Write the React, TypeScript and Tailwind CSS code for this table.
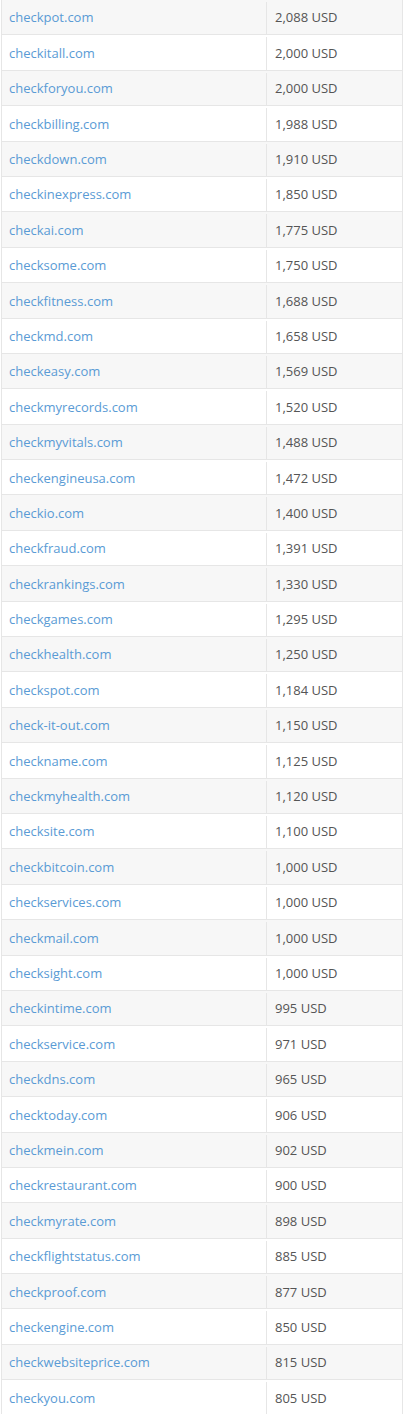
import React from 'react'

const rows: [string, string][] = [
  ['checkpot.com', '2,088 USD'],
  ['checkitall.com', '2,000 USD'],
  ['checkforyou.com', '2,000 USD'],
  ['checkbilling.com', '1,988 USD'],
  ['checkdown.com', '1,910 USD'],
  ['checkinexpress.com', '1,850 USD'],
  ['checkai.com', '1,775 USD'],
  ['checksome.com', '1,750 USD'],
  ['checkfitness.com', '1,688 USD'],
  ['checkmd.com', '1,658 USD'],
  ['checkeasy.com', '1,569 USD'],
  ['checkmyrecords.com', '1,520 USD'],
  ['checkmyvitals.com', '1,488 USD'],
  ['checkengineusa.com', '1,472 USD'],
  ['checkio.com', '1,400 USD'],
  ['checkfraud.com', '1,391 USD'],
  ['checkrankings.com', '1,330 USD'],
  ['checkgames.com', '1,295 USD'],
  ['checkhealth.com', '1,250 USD'],
  ['checkspot.com', '1,184 USD'],
  ['check-it-out.com', '1,150 USD'],
  ['checkname.com', '1,125 USD'],
  ['checkmyhealth.com', '1,120 USD'],
  ['checksite.com', '1,100 USD'],
  ['checkbitcoin.com', '1,000 USD'],
  ['checkservices.com', '1,000 USD'],
  ['checkmail.com', '1,000 USD'],
  ['checksight.com', '1,000 USD'],
  ['checkintime.com', '995 USD'],
  ['checkservice.com', '971 USD'],
  ['checkdns.com', '965 USD'],
  ['checktoday.com', '906 USD'],
  ['checkmein.com', '902 USD'],
  ['checkrestaurant.com', '900 USD'],
  ['checkmyrate.com', '898 USD'],
  ['checkflightstatus.com', '885 USD'],
  ['checkproof.com', '877 USD'],
  ['checkengine.com', '850 USD'],
  ['checkwebsiteprice.com', '815 USD'],
  ['checkyou.com', '805 USD'],
]

export default function App() {
  return (
    <div className="w-[404px] bg-white" style={{ fontFamily: '"Open Sans", sans-serif' }}>
      <div className="mx-[1px] border-x border-[#e6e6e6]">
        {rows.map(([name, price], i) => (
          <div
            key={name}
            className={`flex h-[35.4px] items-center border-b border-[#e6e6e6] pt-[2px] text-[13px] ${i % 2 === 0 ? 'bg-[#f7f7f7]' : 'bg-white'}`}
          >
            <div className="flex h-full w-[265px] items-center border-r border-[#e6e6e6] pl-[7px]">
              <a href="#" className="text-[#5a9bd5]">{name}</a>
            </div>
            <div className="pl-[8px] text-[#555555]">{price}</div>
          </div>
        ))}
      </div>
    </div>
  )
}
